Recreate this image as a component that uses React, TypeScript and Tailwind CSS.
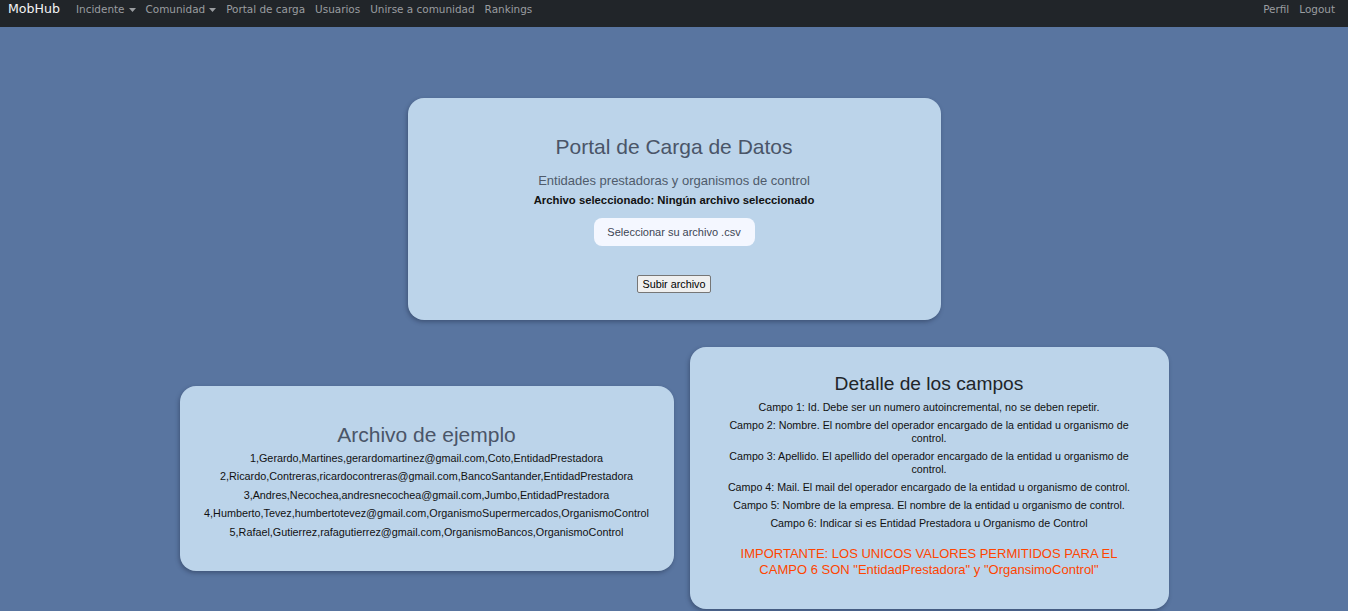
import React from 'react';

const navLinks = [
  { label: 'Incidente', dropdown: true },
  { label: 'Comunidad', dropdown: true },
  { label: 'Portal de carga' },
  { label: 'Usuarios' },
  { label: 'Unirse a comunidad' },
  { label: 'Rankings' },
];

const ejemplo = [
  '1,Gerardo,Martines,gerardomartinez@gmail.com,Coto,EntidadPrestadora',
  '2,Ricardo,Contreras,ricardocontreras@gmail.com,BancoSantander,EntidadPrestadora',
  '3,Andres,Necochea,andresnecochea@gmail.com,Jumbo,EntidadPrestadora',
  '4,Humberto,Tevez,humbertotevez@gmail.com,OrganismoSupermercados,OrganismoControl',
  '5,Rafael,Gutierrez,rafagutierrez@gmail.com,OrganismoBancos,OrganismoControl',
];

const campos = [
  'Campo 1: Id. Debe ser un numero autoincremental, no se deben repetir.',
  'Campo 2: Nombre. El nombre del operador encargado de la entidad u organismo de control.',
  'Campo 3: Apellido. El apellido del operador encargado de la entidad u organismo de control.',
  'Campo 4: Mail. El mail del operador encargado de la entidad u organismo de control.',
  'Campo 5: Nombre de la empresa. El nombre de la entidad u organismo de control.',
  'Campo 6: Indicar si es Entidad Prestadora u Organismo de Control',
];

const Caret = () => (
  <svg width="7" height="4" viewBox="0 0 7 4" className="ml-[4px] mt-[1px]">
    <path d="M0 0h7L3.5 4z" fill="currentColor" />
  </svg>
);

const Navbar = () => (
  <nav className="h-[27px] bg-[#212529] px-[8px] font-['DejaVu_Sans',sans-serif]">
    <div className="h-[19px] flex items-center">
      <span className="text-[#f4f4f4] text-[12.6px] font-normal mr-[11px]">MobHub</span>
      {navLinks.map((l) => (
        <a key={l.label} className="flex items-center px-[5px] text-[10.45px] text-[#9a9da0] cursor-pointer">
          {l.label}
          {l.dropdown && <Caret />}
        </a>
      ))}
      <div className="ml-auto flex items-center">
        <a className="px-[5px] text-[10.45px] text-[#9a9da0]">Perfil</a>
        <a className="px-[5px] text-[10.45px] text-[#9a9da0]">Logout</a>
      </div>
    </div>
  </nav>
);

export default function App() {
  return (
    <div className="min-h-[611px] bg-[#5975a0] font-['Liberation_Sans',Arial,sans-serif]">
      <Navbar />

      {/* Portal de carga */}
      <div className="mx-auto mt-[71px] w-[533px] h-[222px] rounded-[16px] bg-[#bcd4ea] shadow-[-1px_2px_4px_rgba(30,45,70,0.45)] flex flex-col items-center pt-[36px]">
        <h1 className="text-[21px] leading-[25px] text-[#4a5568]">Portal de Carga de Datos</h1>
        <p className="mt-[14px] text-[13px] leading-[16px] text-[#4f5b6b]">Entidades prestadoras y organismos de control</p>
        <p className="mt-[4px] text-[11.3px] leading-[14px] font-bold text-[#111]">
          Archivo seleccionado: Ningún archivo seleccionado
        </p>
        <label className="mt-[11px] w-[161px] h-[28px] rounded-[8px] bg-[#f4f7ff] flex items-center justify-center text-[11px] text-[#3d4654] cursor-pointer">
          Seleccionar su archivo .csv
        </label>
        <button className="mt-[29px] h-[18px] px-[4px] border border-[#767676] rounded-[2px] bg-[#efefef] text-[10.8px] leading-[16px] text-black">
          Subir archivo
        </button>
      </div>

      <div className="flex justify-center items-center gap-[16px] mt-[27px] pb-[2px]">
        {/* Archivo de ejemplo */}
        <div className="w-[494px] h-[185px] rounded-[16px] bg-[#bcd4ea] shadow-[-1px_2px_4px_rgba(30,45,70,0.45)] flex flex-col items-center pt-[36px]">
          <h2 className="text-[21px] leading-[25px] text-[#4a5568]">Archivo de ejemplo</h2>
          <div className="mt-[5px] flex flex-col items-center gap-[5.5px]">
            {ejemplo.map((row) => (
              <p key={row} className="text-[10.8px] leading-[13px] text-[#111]">{row}</p>
            ))}
          </div>
        </div>

        {/* Detalle de los campos */}
        <div className="w-[479px] h-[262px] rounded-[16px] bg-[#bcd4ea] shadow-[-1px_2px_4px_rgba(30,45,70,0.45)] flex flex-col items-center px-[36px] pt-[25px] text-center">
          <h2 className="text-[19.2px] leading-[24px] text-[#212529]">Detalle de los campos</h2>
          <div className="mt-[5px] flex flex-col items-center gap-[5px]">
            {campos.map((c) => (
              <p key={c} className="text-[10.7px] leading-[13px] text-[#111]">{c}</p>
            ))}
          </div>
          <p className="mt-[16px] text-[13px] leading-[16px] text-[#ff4500]">
            IMPORTANTE: LOS UNICOS VALORES PERMITIDOS PARA EL CAMPO 6 SON "EntidadPrestadora" y "OrgansimoControl"
          </p>
        </div>
      </div>
    </div>
  );
}
